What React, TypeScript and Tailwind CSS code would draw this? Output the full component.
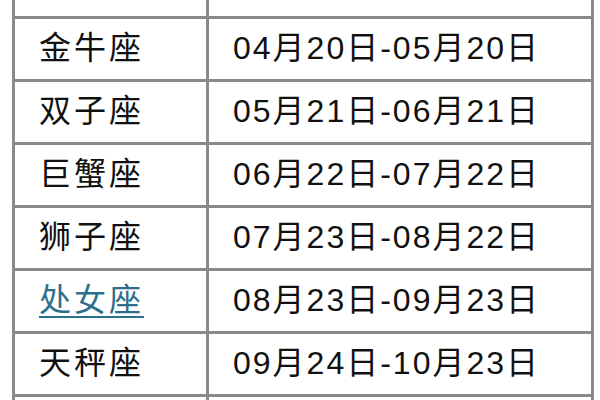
const rows = [
  { name: '白羊座', range: '03月21日-04月19日' },
  { name: '金牛座', range: '04月20日-05月20日' },
  { name: '双子座', range: '05月21日-06月21日' },
  { name: '巨蟹座', range: '06月22日-07月22日' },
  { name: '狮子座', range: '07月23日-08月22日' },
  { name: '处女座', range: '08月23日-09月23日', link: true },
  { name: '天秤座', range: '09月24日-10月23日' },
  { name: '天蝎座', range: '10月24日-11月22日' },
];

export default function App() {
  return (
    <div
      className="w-[600px] h-[400px] overflow-hidden bg-white"
      style={{ fontFamily: '"Liberation Sans", "Noto Sans CJK SC", sans-serif' }}
    >
      <table className="ml-[12px] mt-[-47px] w-[582px] border-collapse text-[32px] text-[#111]">
        <tbody>
          {rows.map((r) => (
            <tr key={r.name} className="h-[63px]">
              <td className="w-[194px] border-[3px] border-[#8a8a8a] pl-[24px] pb-[3px] align-middle leading-none tracking-[3px]">
                {r.link ? (
                  <a href="#" className="text-[#2b6f8c] underline underline-offset-[5px] decoration-2">
                    {r.name}
                  </a>
                ) : (
                  r.name
                )}
              </td>
              <td className="border-[3px] border-[#8a8a8a] pl-[24px] pb-[3px] align-middle leading-none tracking-[2px]">
                {r.range}
              </td>
            </tr>
          ))}
        </tbody>
      </table>
    </div>
  );
}
